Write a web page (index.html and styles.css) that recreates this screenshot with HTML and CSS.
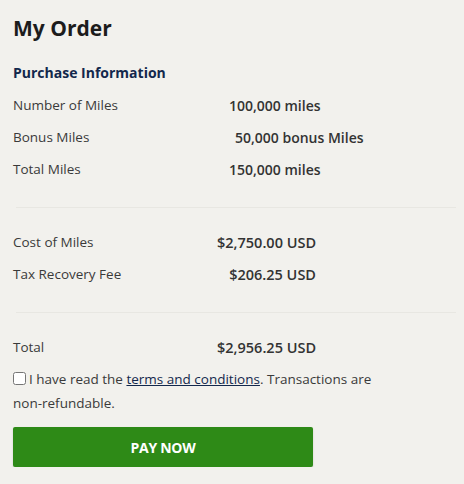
FILE: index.html
```html
<!DOCTYPE html>
<html lang="en">
<head>
  <meta charset="UTF-8">
  <meta name="viewport" content="width=device-width, initial-scale=1.0">
  <title>My Order</title>
  <link rel="stylesheet" href="styles.css">
</head>
<body>
  <div class="order">
    <h1>My Order</h1>

    <section class="group">
      <h2>Purchase Information</h2>
      <div class="row">
        <span class="label">Number of Miles</span>
        <span class="value miles">100,000 miles</span>
      </div>
      <div class="row">
        <span class="label">Bonus Miles</span>
        <span class="value miles bonus">50,000 bonus Miles</span>
      </div>
      <div class="row">
        <span class="label">Total Miles</span>
        <span class="value miles">150,000 miles</span>
      </div>
    </section>

    <section class="group">
      <div class="row">
        <span class="label">Cost of Miles</span>
        <span class="value money">$2,750.00 USD</span>
      </div>
      <div class="row">
        <span class="label">Tax Recovery Fee</span>
        <span class="value money">$206.25 USD</span>
      </div>
    </section>

    <section class="group last">
      <div class="row">
        <span class="label">Total</span>
        <span class="value money">$2,956.25 USD</span>
      </div>
    </section>

    <p class="terms">
      <input type="checkbox" id="agree"><label for="agree">I have read the <a href="#">terms and conditions</a>. Transactions are <span class="nowrap">non-refundable.</span></label>
    </p>

    <button type="button" class="pay">PAY NOW</button>
  </div>
</body>
</html>
```

FILE: styles.css
```css
* {
  margin: 0;
  padding: 0;
  box-sizing: border-box;
}

body {
  font-family: 'Open Sans', sans-serif;
  background-color: #f2f1ed;
  color: #3a3a3a;
}

.order {
  padding: 14px 8px 0 13px;
}

h1 {
  font-size: 21px;
  font-weight: 700;
  color: #1c1c1c;
  line-height: 28px;
  margin-bottom: 21px;
}

h2 {
  font-size: 14px;
  font-weight: 700;
  color: #12284c;
  line-height: 20px;
  margin: 0 0 6px -3px;
}

/* divider starts a little right of the text */
.group {
  border-bottom: 1px solid #e8e7e2;
  padding-bottom: 22px;
  margin-bottom: 18px;
  margin-left: 3px;
}

.group .row {
  margin-left: -3px;
}

.group.last {
  border-bottom: none;
  padding-bottom: 0;
  margin-bottom: 4px;
}

.row {
  display: grid;
  grid-template-columns: 204px 99px;
  height: 32px;
  align-items: center;
  font-size: 13.5px;
}

.value {
  text-align: right;
  font-size: 14px;
  font-weight: 600;
  color: #333;
  white-space: nowrap;
}

.value.money {
  font-size: 14.5px;
}

.value.miles {
  text-align: left;
  padding-left: 12px;
}

.value.bonus {
  padding-left: 18px;
}

.terms {
  font-size: 13.5px;
  line-height: 24px;
  color: #3a3a3a;
  max-width: 400px;
}

.terms input {
  width: 13px;
  height: 13px;
  margin: 0 3px 0 0;
  vertical-align: -1px;
}

.terms a {
  color: #12284c;
  text-decoration: underline;
}

.nowrap {
  white-space: nowrap;
}

.pay {
  display: block;
  width: 300px;
  height: 40px;
  margin-top: 12px;
  background-color: #2e8a17;
  color: #fff;
  font-family: inherit;
  font-size: 14px;
  font-weight: 700;
  letter-spacing: -0.3px;
  border: none;
  border-radius: 2px;
  box-shadow: 0 1px 2px rgba(0, 0, 0, 0.15);
  cursor: pointer;
}
```
